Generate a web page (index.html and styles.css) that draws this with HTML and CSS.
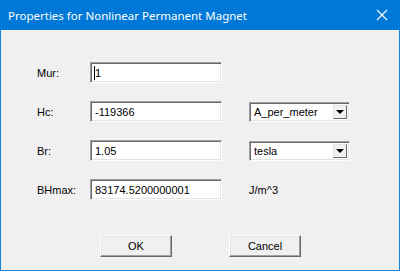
FILE: index.html
```html
<!DOCTYPE html>
<html lang="en">
<head>
    <meta charset="UTF-8">
    <title>Properties for Nonlinear Permanent Magnet</title>
    <link rel="stylesheet" href="styles.css">
</head>
<body>
    <div class="window">
        <div class="titlebar">
            <span class="title">Properties for Nonlinear Permanent Magnet</span>
            <svg class="close" width="12" height="12" viewBox="0 0 12 12">
                <path d="M1 1 L11 11 M11 1 L1 11" stroke="#fff" stroke-width="1.1" fill="none"/>
            </svg>
        </div>

        <div class="content">
            <div class="form">
                <label>Mur:</label>
                <div class="field"><span class="caret"></span>1</div>
                <div></div>

                <label>Hc:</label>
                <div class="field">-119366</div>
                <div class="combo">
                    <span>A_per_meter</span>
                    <span class="drop"><span class="arrow"></span></span>
                </div>

                <label>Br:</label>
                <div class="field">1.05</div>
                <div class="combo">
                    <span>tesla</span>
                    <span class="drop"><span class="arrow"></span></span>
                </div>

                <label>BHmax:</label>
                <div class="field">83174.5200000001</div>
                <div class="unit">J/m^3</div>
            </div>

            <div class="buttons">
                <button>OK</button>
                <button>Cancel</button>
            </div>
        </div>
    </div>
</body>
</html>
```

FILE: styles.css
```css
body {
    margin: 0;
    padding: 0;
    font-family: "Liberation Sans", Arial, sans-serif;
    font-size: 11px;
    color: #000;
}

.window {
    width: 400px;
    height: 271px;
    box-sizing: border-box;
    border: 1px solid #1a82d8;
    border-top: none;
    background-color: #f0f0f0;
}

.titlebar {
    height: 30px;
    margin: 0 -1px;
    background-color: #0078d7;
    color: #fff;
    display: flex;
    align-items: center;
    justify-content: space-between;
    padding: 0 12px 0 8px;
}

.title {
    font-family: "Noto Sans", sans-serif;
    font-size: 11.5px;
}

.close {
    display: block;
}

.content {
    padding: 32px 0 0 36px;
}

.form {
    display: grid;
    grid-template-columns: 53px 132px 128px;
    row-gap: 18px;
    align-items: center;
}

.field {
    height: 21px;
    box-sizing: border-box;
    background-color: #fff;
    border-top: 1px solid #a0a0a0;
    border-left: 1px solid #a0a0a0;
    border-right: 1px solid #fff;
    border-bottom: 1px solid #fff;
    box-shadow: inset 1px 1px 0 #696969, inset -1px -1px 0 #e3e3e3;
    padding: 3px 0 0 4px;
    line-height: 14px;
    position: relative;
}

.caret {
    position: absolute;
    left: 3px;
    top: 3px;
    width: 1px;
    height: 14px;
    background-color: #000;
}

.combo {
    width: 101px;
    height: 20px;
    margin-left: 27px;
    box-sizing: border-box;
    background-color: #fff;
    border-top: 1px solid #a0a0a0;
    border-left: 1px solid #a0a0a0;
    border-right: 1px solid #fff;
    border-bottom: 1px solid #fff;
    box-shadow: inset 1px 1px 0 #696969, inset -1px -1px 0 #e3e3e3;
    display: flex;
    align-items: center;
    justify-content: space-between;
    padding: 0 2px 0 4px;
}

.drop {
    width: 14px;
    height: 14px;
    box-sizing: border-box;
    background-color: #f0f0f0;
    border-top: 1px solid #e3e3e3;
    border-left: 1px solid #e3e3e3;
    border-right: 1px solid #696969;
    border-bottom: 1px solid #696969;
    display: flex;
    align-items: center;
    justify-content: center;
}

.arrow {
    width: 0;
    height: 0;
    border-left: 4px solid transparent;
    border-right: 4px solid transparent;
    border-top: 4px solid #000;
}

.unit {
    margin-left: 27px;
}

.buttons {
    display: flex;
    gap: 57px;
    margin: 35px 0 0 63px;
}

button {
    width: 72px;
    height: 22px;
    box-sizing: border-box;
    font-family: "Liberation Sans", Arial, sans-serif;
    font-size: 11px;
    color: #000;
    background-color: #f0f0f0;
    border-top: 1px solid #fff;
    border-left: 1px solid #fff;
    border-right: 1px solid #696969;
    border-bottom: 1px solid #696969;
    box-shadow: inset -1px -1px 0 #a0a0a0, inset 1px 1px 0 #e3e3e3;
    padding: 0;
}
```
